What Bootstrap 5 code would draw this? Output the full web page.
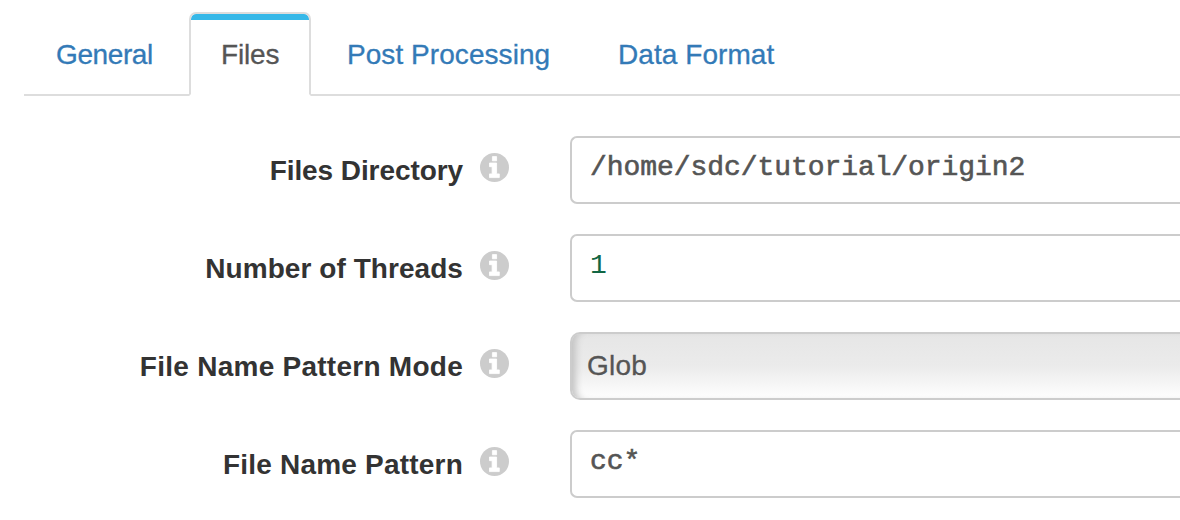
<!DOCTYPE html>
<html lang="en">
<head>
<meta charset="utf-8">
<meta name="viewport" content="width=device-width, initial-scale=1">
<title>Files origin configuration</title>
<link href="https://cdn.jsdelivr.net/npm/bootstrap@5.3.0/dist/css/bootstrap.min.css" rel="stylesheet">
<style>
  body { font-family: "Liberation Sans", Arial, sans-serif; font-size: 28px; line-height: 40px; color: #333; background: #fff; height: 520px; }
  .config-tabs { --bs-nav-tabs-border-width: 2px; --bs-nav-tabs-border-color: #ddd; margin-left: 24px; padding-top: 12px; gap: 4px; }
  .config-tabs .nav-link { height: 84px; padding: 21px 0 0 30px; border: 2px solid transparent; border-radius: 7px 7px 0 0; margin-bottom: -2px; color: #337ab7; white-space: nowrap; -webkit-text-stroke: .3px currentColor; }
  .config-tabs .nav-link.active { color: #555; background: linear-gradient(#36b8e8 6px, #fff 6px) padding-box; border-color: #ddd #ddd #fff; }
  .tab-general { width: 161px; letter-spacing: -.4px; }
  .tab-files { width: 122px; letter-spacing: -.15px; }
  .tab-post { width: 267px; letter-spacing: .06px; }
  .tab-format { letter-spacing: .06px; }
  .config-form { padding-top: 40px; gap: 30px; }
  .config-row { height: 68px; }
  .config-label { width: 463px; padding-top: 15px; font-weight: 700; line-height: 40px; white-space: nowrap; }
  .label-directory { letter-spacing: -.08px; }
  .label-threads { letter-spacing: .06px; }
  .label-mode { letter-spacing: .26px; }
  .label-pattern { letter-spacing: .2px; }
  .info-icon { width: 29px; height: 29px; margin: 17px 61px 0 17px; }
  .config-input { height: 68px; border: 2px solid #ccc; border-right: 0; border-radius: 7px 0 0 7px; padding: 0 0 5px 18px; font-size: 28px; color: #555; box-shadow: none; }
  .code-input { font-family: "Liberation Mono", "Courier New", monospace; letter-spacing: -.06px; -webkit-text-stroke: .6px currentColor; }
  .number-input { color: #116644; -webkit-text-stroke: 0; }
  .select-input { border-radius: 10px 0 0 10px; padding-left: 15px; padding-bottom: 0; letter-spacing: .2px; -webkit-text-stroke: .3px currentColor; background: linear-gradient(#e6e6e6 0%, #ebebeb 50%, #fefefe 100%); box-shadow: inset 8px 0 7px -4px #c4c4c4; }
</style>
</head>
<body class="overflow-hidden">
<ul class="nav nav-tabs config-tabs flex-nowrap">
  <li class="nav-item tab-general"><a class="nav-link" href="#">General</a></li>
  <li class="nav-item tab-files"><a class="nav-link active" href="#">Files</a></li>
  <li class="nav-item tab-post"><a class="nav-link" href="#">Post Processing</a></li>
  <li class="nav-item tab-format"><a class="nav-link" href="#">Data Format</a></li>
</ul>
<svg class="d-none" aria-hidden="true">
  <symbol id="info" viewBox="0 0 29 29">
    <circle cx="14.5" cy="14.5" r="14.5" fill="#ccc"/>
    <path fill="#fff" stroke="#fff" stroke-width=".8" stroke-linejoin="round" d="M12.4 3.6h4.2v4.2h-4.2zM9.5 10h7.1v10.9h2.7v3.7H9.5v-3.7h2.6v-7.2H9.5z"/>
  </symbol>
</svg>
<form class="config-form d-flex flex-column">
  <div class="config-row d-flex">
    <label class="config-label label-directory text-end flex-shrink-0">Files Directory</label>
    <svg class="info-icon flex-shrink-0"><use href="#info"/></svg>
    <div class="config-input code-input flex-grow-1 d-flex align-items-center">/home/sdc/tutorial/origin2</div>
  </div>
  <div class="config-row d-flex">
    <label class="config-label label-threads text-end flex-shrink-0">Number of Threads</label>
    <svg class="info-icon flex-shrink-0"><use href="#info"/></svg>
    <div class="config-input code-input number-input flex-grow-1 d-flex align-items-center">1</div>
  </div>
  <div class="config-row d-flex">
    <label class="config-label label-mode text-end flex-shrink-0">File Name Pattern Mode</label>
    <svg class="info-icon flex-shrink-0"><use href="#info"/></svg>
    <div class="config-input select-input flex-grow-1 d-flex align-items-center">Glob</div>
  </div>
  <div class="config-row d-flex">
    <label class="config-label label-pattern text-end flex-shrink-0">File Name Pattern</label>
    <svg class="info-icon flex-shrink-0"><use href="#info"/></svg>
    <div class="config-input code-input flex-grow-1 d-flex align-items-center">cc*</div>
  </div>
</form>
<script src="https://cdn.jsdelivr.net/npm/bootstrap@5.3.0/dist/js/bootstrap.bundle.min.js"></script>
</body>
</html>
